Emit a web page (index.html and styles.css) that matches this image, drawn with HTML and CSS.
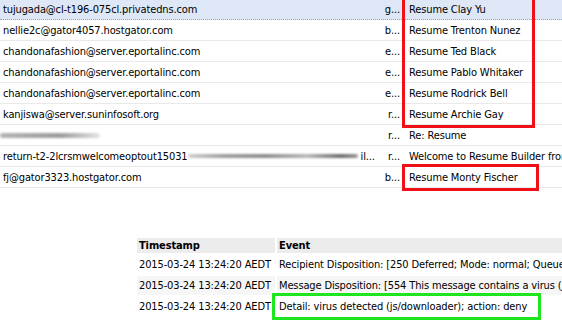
FILE: index.html
```html
<!DOCTYPE html>
<html lang="en">
<head>
    <meta charset="UTF-8">
    <meta name="viewport" content="width=device-width, initial-scale=1.0">
    <title>Message tracking</title>
    <link rel="stylesheet" href="styles.css">
</head>
<body>
    <div class="mail-list">
        <div class="mail-row selected">
            <div class="from">tujugada@cl-t196-075cl.privatedns.com</div>
            <div class="to">g...</div>
            <div class="subject">Resume Clay Yu</div>
        </div>
        <div class="mail-row">
            <div class="from">nellie2c@gator4057.hostgator.com</div>
            <div class="to">b...</div>
            <div class="subject">Resume Trenton Nunez</div>
        </div>
        <div class="mail-row">
            <div class="from">chandonafashion@server.eportalinc.com</div>
            <div class="to">e...</div>
            <div class="subject">Resume Ted Black</div>
        </div>
        <div class="mail-row">
            <div class="from">chandonafashion@server.eportalinc.com</div>
            <div class="to">e...</div>
            <div class="subject">Resume Pablo Whitaker</div>
        </div>
        <div class="mail-row">
            <div class="from">chandonafashion@server.eportalinc.com</div>
            <div class="to">e...</div>
            <div class="subject">Resume Rodrick Bell</div>
        </div>
        <div class="mail-row">
            <div class="from">kanjiswa@server.suninfosoft.org</div>
            <div class="to">r...</div>
            <div class="subject">Resume Archie Gay</div>
        </div>
        <div class="mail-row">
            <div class="from"><span class="smudge smudge-short"></span></div>
            <div class="to">r...</div>
            <div class="subject">Re: Resume</div>
        </div>
        <div class="mail-row">
            <div class="from">return-t2-2lcrsmwelcomeoptout15031<span class="smudge smudge-long"></span><span class="tail">il...</span></div>
            <div class="to">r...</div>
            <div class="subject">Welcome to Resume Builder from</div>
        </div>
        <div class="mail-row">
            <div class="from">fj@gator3323.hostgator.com</div>
            <div class="to">b...</div>
            <div class="subject">Resume Monty Fischer</div>
        </div>

        <!-- annotation boxes -->
        <div class="mark mark-top"></div>
        <div class="mark mark-bottom"></div>
    </div>

    <table class="events">
        <thead>
            <tr>
                <th class="ts">Timestamp</th>
                <th>Event</th>
            </tr>
        </thead>
        <tbody>
            <tr>
                <td class="ts">2015-03-24 13:24:20 AEDT</td>
                <td>Recipient Disposition: [250 Deferred; Mode: normal; Queue</td>
            </tr>
            <tr class="alt">
                <td class="ts">2015-03-24 13:24:20 AEDT</td>
                <td>Message Disposition: [554 This message contains a virus (J</td>
            </tr>
            <tr>
                <td class="ts">2015-03-24 13:24:20 AEDT</td>
                <td class="open"><span class="highlight">Detail: virus detected (js/downloader); action: deny</span></td>
            </tr>
        </tbody>
    </table>
</body>
</html>
```

FILE: styles.css
```css
:root {
    --text-color: #000;
    --row-border: #e9e9e9;
    --selected-bg: #dde7f5;
    --mark-red: #f01018;
    --mark-green: #1ee61e;
}

html, body {
    margin: 0;
    padding: 0;
}

body {
    width: 562px;
    height: 324px;
    overflow: hidden;
    background: #fff;
    color: var(--text-color);
    font-family: 'DejaVu Sans Condensed', 'Liberation Sans', sans-serif;
    font-size: 11px;
    letter-spacing: -0.13px;
}

.mail-list {
    position: relative;
}

.mail-row {
    display: grid;
    grid-template-columns: 378px 26px 1fr;
    height: 20px;
    line-height: 21px;
    border-bottom: 1px solid var(--row-border);
    white-space: nowrap;
}

.mail-row.selected {
    height: 19px;
    line-height: 20px;
    background: var(--selected-bg);
    border-bottom: 1px dotted #8fa6cc;
}

.from {
    padding-left: 3px;
    overflow: hidden;
    display: flex;
    align-items: center;
}

.to {
    text-align: right;
    padding-right: 4px;
    overflow: hidden;
}

.subject {
    padding-left: 5px;
    overflow: hidden;
}

.smudge {
    display: inline-block;
    border-radius: 3px;
    filter: blur(1.2px);
}

.smudge-short {
    width: 100px;
    height: 5px;
    margin-left: -3px;
    background: linear-gradient(90deg, #b4b4b4, #9c9c9c 60%, #c8c8c8 85%, #e4e4e4);
}

.smudge-long {
    width: 170px;
    height: 4px;
    margin-left: 0;
    background: linear-gradient(90deg, #d0d0d0, #a0a0a0 20%, #8c8c8c 45%, #b8b8b8 70%, #6e6e6e 90%, #9a9a9a);
}

.tail {
    margin-left: 3px;
}

.mark {
    position: absolute;
    border: 3px solid var(--mark-red);
    pointer-events: none;
}

.mark-top {
    left: 402px;
    top: -6px;
    width: 127px;
    height: 128px;
}

.mark-bottom {
    left: 402px;
    top: 164px;
    width: 131px;
    height: 21px;
}

.events {
    margin: 48px 0 0 135px;
    border-spacing: 2px;
    white-space: nowrap;
    table-layout: fixed;
    width: 440px;
}

.events th,
.events td {
    text-align: left;
    padding: 0 2px;
    overflow: hidden;
}

.events td.open {
    overflow: visible;
}

.events th {
    background: #ececec;
    font-weight: bold;
    height: 15px;
    line-height: 15px;
}

.events td {
    height: 19px;
    line-height: 19px;
}

.events th.ts,
.events td.ts {
    width: 134px;
}

.events tr.alt td {
    background: #f6f6f6;
}

.highlight {
    display: inline-block;
    box-sizing: border-box;
    vertical-align: top;
    height: 19px;
    line-height: 19px;
    width: 261px;
    margin-left: -3px;
    padding-left: 3px;
    outline: 3px solid var(--mark-green);
    outline-offset: 1px;
}
```
